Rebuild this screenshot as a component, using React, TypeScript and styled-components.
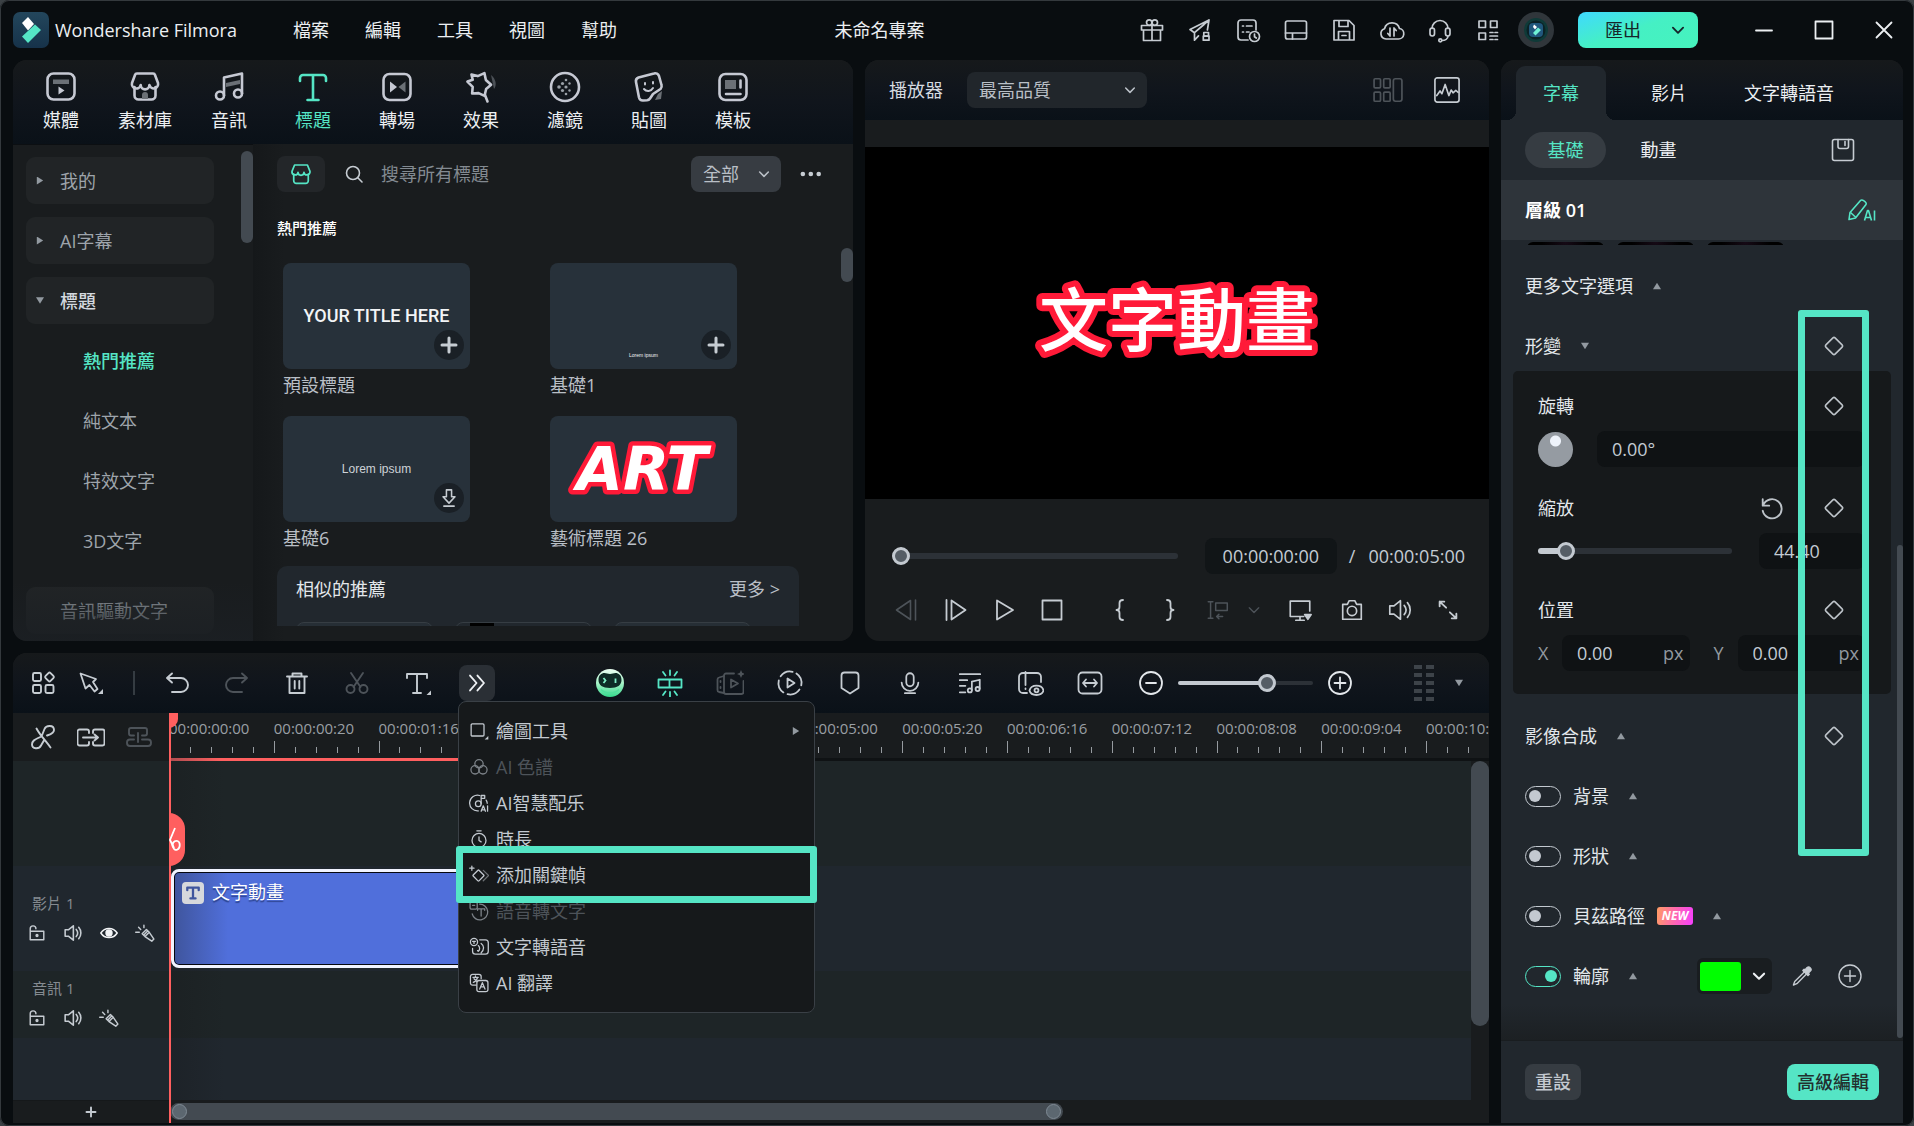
import React, { ReactNode } from "react";
import styled, { createGlobalStyle, css } from "styled-components";

const MINT = "#55e5c5";
const RED = "#ff5f5f";
const FONT = `"Open Sans", "Noto Sans CJK TC", sans-serif`;

const GlobalStyle = createGlobalStyle`
  *, *::before, *::after { box-sizing: border-box; }
  html, body, #root { height: 100%; }
  body { margin: 0; background: #3b4145; color: #d5dae0; font: 18px/24px ${FONT}; }
  button, input, select { font: inherit; color: inherit; margin: 0; padding: 0; border: 0; background: none; outline: none; }
  button { cursor: pointer; }
  h1, h2, p { margin: 0; font: inherit; }
`;

/* ---------- icons ---------- */

const Svg = styled.svg<{ $size: number; $weight: number }>`
  display: block;
  flex: none;
  width: ${(p) => p.$size}px;
  height: ${(p) => p.$size}px;
  fill: none;
  stroke: currentColor;
  stroke-width: ${(p) => p.$weight};
  stroke-linecap: round;
  stroke-linejoin: round;
`;

const glyphs: Record<string, ReactNode> = {
  gift: (<><path d="M3.5 9.5h21v4.5h-21zM5.5 14v10.5h17V14M14 9.5v15" /><circle cx="11.2" cy="6.6" r="2.7" /><circle cx="16.8" cy="6.6" r="2.7" /></>),
  send: (<><path d="M23 4L4 13.5l4.5 3.2L23 4l-1.6 10M8.500 16.700v7.500l4-4.300M8.500 16.700L18 8.500" /><rect x="17.800" y="16.500" width="4.700" height="3.700" /><rect x="17.300" y="20.200" width="5.700" height="4" /></>),
  history: (<><path d="M14 24H7a3 3 0 0 1-3-3V7a3 3 0 0 1 3-3h12a3 3 0 0 1 3 3v7" /><path d="M8.500 10h1M12.500 10H18M8.500 16h1M12.500 16H15" /><circle cx="20.500" cy="20.500" r="5" /><path d="M20.500 18v2.700l1.800 1.300" /></>),
  layout: (<><rect x="3.500" y="5" width="21" height="18" rx="2" /><path d="M3.500 17h21M10.500 17v6" /></>),
  save: (<><path d="M4 4.500h15l5 5V24H4zM9 4.500v6h9v-6M8.500 24v-8.500h11V24M12 19.500h4" /></>),
  cloud: (<><path d="M8 23a5.300 5.300 0 0 1-1.500-10.300 7.800 7.800 0 0 1 15-0.200A5.300 5.300 0 0 1 20.300 23z" /><path d="M12 12v8M12 20l-2.200-2.500M16 20v-8M16 12l2.200 2.500" /></>),
  headset: (<><path d="M6 12.500a8 8 0 0 1 16 0" /><rect x="4" y="12" width="4.500" height="8" rx="2.200" /><rect x="19.500" y="12" width="4.500" height="8" rx="2.200" /><path d="M22 20c0 3-3 4.500-6 4.500" /><circle cx="14.300" cy="24.300" r="1.500" /></>),
  qr: (<><rect x="5" y="5" width="6.500" height="6.500" /><rect x="16.500" y="5" width="6.500" height="6.500" /><rect x="5" y="17" width="6.500" height="6.500" /><path d="M16 16.500h3M21 16.500h2.500M16 20h7.500M16 23.500h3M21 23.500h2.500" /></>),
  minimize: <path d="M6 14.500h16" />,
  maximize: <rect x="5.500" y="5.500" width="17" height="17" />,
  close: <path d="M6.500 6.500l15 15M21.500 6.500l-15 15" />,
  chevron: <path d="M8.500 11.500L14 17l5.500-5.500" />,
  search: (<><circle cx="13" cy="13" r="6.500" /><path d="M17.800 17.800L22 22" /></>),
  store: (<><path d="M5.500 14v8a3 3 0 0 0 3 3h11a3 3 0 0 0 3-3v-8" /><path d="M6.500 3.500h15l3 7.500a3.400 3.400 0 0 1-7 1 3.500 3.500 0 0 1-7 0 3.400 3.400 0 0 1-7-1z" /></>),
  dots: (<g fill="currentColor" stroke="none"><circle cx="4.500" cy="14" r="2.700" /><circle cx="13.800" cy="14" r="2.700" /><circle cx="23" cy="14" r="2.700" /></g>),
  plus: <path d="M14 7v14M7 14h14" />,
  download: <path d="M11 4.500h6v8h4L14 20l-7-7.500h4zM8 23.500h12" />,
  compare: (<g><rect x="1" y="3.500" width="6" height="8.500" rx="1" /><rect x="10" y="3.500" width="6" height="8.500" rx="1" /><rect x="1" y="16" width="6" height="8.500" rx="1" /><rect x="10" y="16" width="6" height="8.500" rx="1" /><rect x="19" y="3.500" width="8" height="21" rx="2" /></g>),
  wave: (<><rect x="1" y="1" width="26" height="26" rx="2.500" /><path d="M3 20l3.500-5 2 3 3.500-10 4 12 2.500-6 2 3 3-2.500 2.500 2" /></>),
  prev: <path d="M18.500 4.500L4.500 14l14 9.500zM23.500 4v20" />,
  next: <path d="M9.500 4.500L23.500 14l-14 9.500zM4.500 4v20" />,
  play: <path d="M6 4.500L22 14 6 23.500z" />,
  stop: <rect x="4.500" y="4.500" width="19" height="19" />,
  braceL: <path d="M17 4c-3 0-3.500 1-3.500 3v4c0 2-1 3-3 3 2 0 3 1 3 3v4c0 2 .5 3 3.500 3" />,
  braceR: <path d="M11 4c3 0 3.500 1 3.500 3v4c0 2 1 3 3 3-2 0-3 1-3 3v4c0 2-.5 3-3.500 3" />,
  insert: (<><path d="M3.500 5h5M6 5v18M3.500 23h5" /><rect x="11.500" y="6.500" width="12.500" height="8" /><path d="M19 21h-6.500M15 18.500L12.500 21l2.500 2.500" /></>),
  monitor: (<><path d="M18 21H3.500V4.500h21V15M14 21v4M9.500 25h9" /><path d="M19 19h7l-3.500 5z" fill="currentColor" /></>),
  camera: (<><path d="M4 8h5l2-4h6l2 4h5v16H4z" /><circle cx="14" cy="15" r="5" /></>),
  speaker: (<><path d="M3 9.500h4.500L14.500 4v20l-7-5.500H3zM18.500 9c2.500 3 2.500 7 0 10M22 6c4 4.500 4 11.500 0 16" /></>),
  expand: (<><path d="M5 10V5h5M5 5l7 6.500M23 18v5h-5M23 23l-7-6.500" /></>),
  apps: (<><rect x="4" y="4" width="8" height="8" rx="1.500" /><rect x="4" y="16" width="8" height="8" rx="1.500" /><rect x="16.500" y="16" width="8" height="8" rx="1.500" /><rect x="17" y="4.500" width="7" height="7" rx="1.500" transform="rotate(45 20.500 8)" /></>),
  cursor: (<><path d="M3.500 4.500L19 10l-3 3 4.500 7-3 2.500L12.500 16l-4 3.500z" /><path d="M21 25h5v-5z" fill="currentColor" stroke="none" /></>),
  undo: <path d="M9 4.500L4 9l5 4.500M4 9h14a7 7 0 0 1 0 14H9" />,
  redo: <path d="M19 4.500L24 9l-5 4.500M24 9H10a7 7 0 0 0 0 14h9" />,
  trash: (<path d="M4 7.500h20M9.500 7.500v-3h9v3M6.500 7.500V24h15V7.500M11.700 12v7.500M16.300 12v7.500" />),
  cut: (<><path d="M8 4l9.500 14M20 4l-9.500 14" /><circle cx="7.500" cy="20" r="4" /><circle cx="20.500" cy="20" r="4" /></>),
  text: (<><path d="M4 9V5h20v4M14 5v19M10 24h8" /><path d="M23.500 26h5.500v-5.500z" fill="currentColor" stroke="none" /></>),
  serifT: <path d="M4 9V4.500h20V9M14 4.500v19M9.500 23.500h9" />,
  more: <path d="M6.500 6l7 8-7 8M14.500 6l7 8-7 8" />,
  autocut: (<><path d="M2.500 10.500h11v8h-11zM13.500 10.500h12v8h-12zM14 1.500v4.500M14 23v4.500M7 3l2.500 3.500M21 3l-2.500 3.500M7 26l2.500-3.500M21 26l-2.500-3.500" /></>),
  film: (<><path d="M18 4.500h-8a2 2 0 0 0-2 2V23a2 2 0 0 0 2 2h15.500a2 2 0 0 0 2-2V12" /><path d="M8 7L3 8.500a2 2 0 0 0-1.500 2V21a2 2 0 0 0 1.500 2l5 1M4.500 12v1M4.500 18v1" /><path d="M15 10.500v8l7-4z" /><path d="M25 1l1.200 2.800L29 5l-2.800 1.200L25 9l-1.200-2.800L21 5l2.800-1.200z" fill="currentColor" stroke="none" /></>),
  record: (<><circle cx="14" cy="14" r="11.500" strokeDasharray="13.500 4.560" transform="rotate(-56 14 14)" /><path d="M11.500 9.500v9l7-4.500z" /></>),
  marker: <path d="M5.500 6.500a3 3 0 0 1 3-3h11a3 3 0 0 1 3 3V19L14 24.500 5.500 19z" />,
  mic: (<><rect x="10" y="3.500" width="8" height="14" rx="4" /><path d="M5 13.500a9 9 0 0 0 18 0M8.500 25h11" /></>),
  music: (<><path d="M3 4.500h22M3 11h8M3 17h6M3 24h6" /><path d="M16 21.500v-9l8.500-2v9.500" /><circle cx="13.800" cy="22" r="2.200" /><circle cx="22.200" cy="20.500" r="2.200" /></>),
  preview: (<><path d="M11 24H7a4 4 0 0 1-4-4V8a4 4 0 0 1 4-4h14a4 4 0 0 1 4 4v5M9.500 3v13M9.500 19.500v.5" /><path d="M13.500 21.500c1.500-6.500 12.500-6.500 14 0-1.500 6-12.500 6-14 0z" /><circle cx="20.500" cy="21.300" r="2" /></>),
  fit: (<><rect x="2.500" y="3.500" width="23" height="21" rx="4" /><path d="M7 14h14M10 10.500L7 14l3 3.500M18 10.500l3 3.500-3 3.500" /></>),
  zoomOut: (<><circle cx="14" cy="14" r="11" /><path d="M9 14h10" /></>),
  zoomIn: (<><circle cx="14" cy="14" r="11" /><path d="M8.500 14h11M14 8.500v11" /></>),
  unlink: (<path d="M7.500 5.500c3 6 9 12 14 19M12.500 13.500L15.500 6c1.500-4 9.500-4.500 9.500 1 0 3.500-4 4.500-7 5.500M15.500 16.500l-3.500 6c-2 4-9 3.500-9-1 0-5 5-5.500 10-8.500" />),
  chain: (<><path d="M12 19v1.500a2 2 0 0 1-2 2H2.500a2 2 0 0 1-2-2v-12a2 2 0 0 1 2-2H10a2 2 0 0 1 2 2V10M16 10V8.500a2 2 0 0 1 2-2h7.500a2 2 0 0 1 2 2v12a2 2 0 0 1-2 2H18a2 2 0 0 1-2-2V19M6 14.500h15M17.500 11.500l3.500 3-3.500 3" /></>),
  magnet: (<path d="M9 12.500H6a2 2 0 0 1-2-2V7a2 2 0 0 1 2-2h14a2 2 0 0 1 2 2v3.500a2 2 0 0 1-2 2h-3M9 16.500H5a3 3 0 0 0-3 3V20a3 3 0 0 0 3 3h18a3 3 0 0 0 3-3v-.5a3 3 0 0 0-3-3h-6M13 10v9" />),
  lock: (<><path d="M4.500 11.500h19v12h-19zM4.500 11.500V8a4 4 0 0 1 8 0" /><circle cx="14" cy="17.500" r="1.300" fill="currentColor" /></>),
  eye: (<><path d="M2.500 14C8 5.500 20 5.500 25.500 14 20 22.500 8 22.500 2.500 14z" /><circle cx="14" cy="14" r="4.200" fill="currentColor" /></>),
  wand: (<><path d="M10 15l6-6 4 4-6 6zM14 19c1-1 4-5 6-6l6.500 9.500-3 3zM12.500 3v3.500M5 6l3 3M1 13h5M13 16l4-4" /></>),
  diamond: <rect x="7.500" y="7.500" width="13" height="13" rx="1.500" transform="rotate(45 14 14)" />,
  reset: <path d="M4 4.500v7h7M4.500 11A10.300 10.300 0 1 1 4 17" />,
  preset: (<><rect x="3.500" y="3.500" width="21" height="21" rx="2" /><path d="M9 3.500v7a2 2 0 0 0 2 2h6.500a2 2 0 0 0 2-2v-7M16 5.500v4" /></>),
  dropper: (<><path d="M17 9L5.500 20.500 4 24.500l4-1.500L19.500 11.500" /><path d="M15 7.500l6 6 1.500-1.500-1-1.500 2.500-2.500c2-2-1.500-6-4-4L17.500 7l-1-1z" fill="currentColor" /></>),
  square: (<><rect x="3" y="4" width="18" height="17" rx="1.500" /><path d="M22 26h5v-5z" fill="currentColor" stroke="none" /></>),
  palette: (<><circle cx="14" cy="9.500" r="5.800" /><circle cx="8.500" cy="18" r="5.800" /><circle cx="19.500" cy="18" r="5.800" /></>),
  aiMusic: (<><path d="M13 25A11 11 0 1 1 15 3.500" /><circle cx="13" cy="15" r="4" /><path d="M17 15V3.500h5v4h-5M24 10c1 1.500 1.500 3 1.500 4.500M17 25.500l3-7.500 3 7.500M18 23.500h4M26 18v7.500" /></>),
  timer: (<><circle cx="14" cy="16" r="9.800" /><path d="M14 11v5l3 2M11 2.500h6" /></>),
  keyframe: (<><rect x="7.500" y="9" width="11.500" height="11.500" rx="1" transform="rotate(45 13.250 14.750)" /><path d="M20 7.500l7.500 7.200-7.500 7.300" opacity=".5" /><path d="M4 1.500v6M1 4.500h6" /></>),
  speechText: (<><rect x="1.500" y="1.500" width="10" height="10" rx="2" /><path d="M5 6h3M15 4.500A11 11 0 1 1 4.500 18M12 13v-2h10v2M17 11v10" /></>),
  textSpeech: (<><circle cx="7" cy="7" r="5" /><path d="M5 6h4M7 6v3M15 4h8a4 4 0 0 1 4 4v12a4 4 0 0 1-4 4H9a4 4 0 0 1-4-4v-4M12 19l.5.500M13 12c2.500 2 2.500 6 0 8M17 9c4.500 3 4.500 9 0 13" /></>),
  translate: (<><path d="M10 17H5a3 3 0 0 1-3-3V5a3 3 0 0 1 3-3h9a3 3 0 0 1 3 3v3M5.500 6H13M9 4v2M12 6c-1 4-3 6-6 7M7 8l4 4" /><rect x="11" y="10.500" width="15.500" height="15.500" rx="3" /><path d="M15 22.500l3.700-9 3.700 9M16.500 19.500h4.500" /></>),
};

const Icon = ({ name, size = 28, weight = 1.6 }: { name: string; size?: number; weight?: number }) => (
  <Svg viewBox="0 0 28 28" $size={size} $weight={weight} aria-hidden="true">{glyphs[name]}</Svg>
);

const tabGlyphs: Record<string, ReactNode> = {
  media: (<><rect x="4.500" y="4.500" width="27" height="26" rx="6" /><path d="M10 10.500h16v4.500H10z" fill="#6b7076" stroke="none" /><path d="M15.500 17.500v8l6-4z" fill="currentColor" stroke="none" /></>),
  stock: (<><path d="M7.500 18v8.500a4 4 0 0 0 4 4h13a4 4 0 0 0 4-4V18" /><path d="M10 4.500h16a2 2 0 0 1 2 1.500l3 8a4.300 4.300 0 0 1-8.600 2 4.300 4.300 0 0 1-8.700 0A4.300 4.300 0 0 1 5 14l3-8a2 2 0 0 1 2-1.500z" /><path d="M15 30v-4a3 3 0 0 1 6 0v4z" fill="#6b7076" stroke="none" /></>),
  audio: (<><circle cx="9" cy="26.500" r="4" /><circle cx="27" cy="24.500" r="4" /><path d="M13 26.500V8.500l18-4v20" /><path d="M15 14l14-3v4l-14 3z" fill="#6b7076" stroke="none" /></>),
  title: <path d="M5 12V9a3 3 0 0 1 3-3h20a3 3 0 0 1 3 3v3M18 6v25M12.500 31h11" />,
  transition: (<><rect x="4.500" y="5" width="27" height="26" rx="6" /><path d="M11 12.500l7 5.500-7 5.500z" fill="currentColor" stroke="none" /><path d="M26.500 12.500l-7 5.500 7 5.500z" fill="#6b7076" stroke="none" /></>),
  effect: (<><path d="M10 4.500l6 2.500 7-2 .5 7 4.500 5.500-5.500 3.500-2.500 6.500-5.500-3.500-6.500-.5 1.500-6.500L5 11l5.500-1z" transform="rotate(-8 16 16)" /><path d="M22 26l2.500 6.500" /><path d="M28 6c5 4 6 10 3 14z" fill="#4b5056" stroke="none" /></>),
  filter: (<><circle cx="18" cy="18" r="14" /><g fill="#9aa0a7" stroke="none"><circle cx="12" cy="18" r="1.800" /><circle cx="15.500" cy="14.500" r="1.600" /><circle cx="15.500" cy="21.500" r="1.600" /><circle cx="19" cy="18" r="1.600" /><circle cx="19" cy="11" r="1.300" /><circle cx="19" cy="25" r="1.300" /><circle cx="22.500" cy="14.500" r="1.200" /><circle cx="22.500" cy="21.500" r="1.200" /></g></>),
  sticker: (<><path d="M22 25l-3 4.500a4 4 0 0 1-3 1.800l-4 .2a4 4 0 0 1-4-3L5 13a4 4 0 0 1 2.500-4.500L23 4.500a4 4 0 0 1 5 2.500l2.500 9a4 4 0 0 1-1 4z" /><path d="M14 14v1.500M22 13v1.500M13 20c2.500 3 7 2.500 9-1" strokeWidth="2" /><path d="M31 22l-1 8-6 1 3-6z" fill="#6b7076" stroke="none" /></>),
  template: (<><rect x="4.500" y="5" width="27" height="26" rx="6" /><path d="M10 11h11v9H10z" fill="#6b7076" stroke="none" /><path d="M25.500 11.500v7M11 25h14.500" /></>),
};

const Triangle = styled.span<{ $dir: "up" | "down" | "right" }>`
  flex: none;
  width: 8px;
  height: 8px;
  background: #9299a0;
  clip-path: ${(p) =>
    p.$dir === "up" ? "polygon(50% 10%, 100% 90%, 0 90%)"
    : p.$dir === "down" ? "polygon(0 10%, 100% 10%, 50% 90%)"
    : "polygon(10% 0, 90% 50%, 10% 100%)"};
`;

/* ---------- window ---------- */

const Window = styled.div`
  height: 100vh;
  min-height: 900px;
  display: flex;
  flex-direction: column;
  background: #090d10;
  border-radius: 9px;
  box-shadow: inset 0 0 0 1px #34393d;
  overflow: hidden;
`;

const TitleBar = styled.header`
  flex: 0 0 60px;
  display: grid;
  grid-template-columns: 1fr auto 1fr;
  align-items: center;
  padding-left: 13px;
`;

const BarSide = styled.div<{ $end?: boolean }>`
  display: flex;
  align-items: center;
  justify-content: ${(p) => (p.$end ? "flex-end" : "flex-start")};
  min-width: 0;
`;

const AppName = styled.h1`
  margin-left: 6px;
  color: #eceff2;
  font-size: 18px;
  white-space: nowrap;
  width: 202px;
`;

const Menus = styled.nav`
  display: flex;
  margin-left: 18px;
`;

const MenuButton = styled.button`
  width: 72px;
  height: 36px;
  color: #eceff2;
`;

const ProjectName = styled.p`
  color: #eceff2;
  padding-right: 168px;
`;

const IconButton = styled.button<{ $w?: number; $dim?: boolean; $color?: string }>`
  flex: none;
  width: ${(p) => p.$w ?? 48}px;
  height: 36px;
  display: flex;
  align-items: center;
  justify-content: center;
  color: ${(p) => (p.$dim ? "#4d5359" : p.$color ?? "#c6ccd2")};
`;

const Avatar = styled.button`
  width: 36px;
  height: 36px;
  margin: 0 24px 0 6px;
  border-radius: 50%;
  background: #30363b;
  display: grid;
  place-items: center;
`;

const ExportButton = styled.button`
  flex: none;
  width: 120px;
  height: 36px;
  margin-right: 36px;
  padding: 0 7px 0 27px;
  display: flex;
  align-items: center;
  justify-content: space-between;
  border-radius: 8px;
  background: linear-gradient(160deg, #3fd9ff 0%, #45f0c4 48%, #46f3bd 100%);
  color: #16252a;
`;

const Workspace = styled.main`
  flex: 1;
  min-height: 0;
  display: grid;
  grid-template-columns: minmax(0, 840fr) minmax(0, 624fr) minmax(0, 402fr);
  grid-template-rows: minmax(0, 581fr) minmax(0, 470fr);
  gap: 12px;
  padding: 0 11px 3px 13px;
`;

const Panel = styled.section`
  position: relative;
  display: flex;
  flex-direction: column;
  min-width: 0;
  min-height: 0;
  overflow: hidden;
  border-radius: 14px;
  background: #191c1e;
`;

const headerShade = css`
  background: linear-gradient(#16191b, #10151c 50%, #0a1118);
`;

/* ---------- media library ---------- */

const LibraryTabs = styled.nav`
  ${headerShade}
  flex: 0 0 84px;
  display: flex;
  padding-left: 6px;
`;

const LibraryTab = styled.button<{ $active?: boolean }>`
  width: 84px;
  display: flex;
  flex-direction: column;
  align-items: center;
  padding-top: 9px;
  gap: 3px;
  white-space: nowrap;
  color: ${(p) => (p.$active ? MINT : "#eceff2")};
  svg { color: ${(p) => (p.$active ? MINT : "#c6c9d3")}; }
`;

const LibraryBody = styled.div`
  flex: 1;
  min-height: 0;
  display: grid;
  grid-template-columns: 240px minmax(0, 1fr);
  grid-template-rows: minmax(0, 1fr);
`;

const Sidebar = styled.aside`
  position: relative;
  display: flex;
  flex-direction: column;
  gap: 13px;
  padding: 12px 39px 0 13px;
  border-top: 1px solid #0c0f12;
  overflow: hidden;
  &::after {
    content: "";
    position: absolute;
    inset: auto 0 0;
    height: 60px;
    background: linear-gradient(rgba(27, 31, 35, 0), rgba(27, 31, 35, 0.9));
    pointer-events: none;
  }
`;

const Folder = styled.button<{ $open?: boolean; $last?: boolean }>`
  flex: none;
  height: 47px;
  margin-top: ${(p) => (p.$last ? 10 : 0)}px;
  display: flex;
  align-items: center;
  gap: 16px;
  padding-left: 10px;
  border-radius: 9px;
  background: #212426;
  color: ${(p) => (p.$open ? "#d3d8de" : "#9ea4ab")};
  font-weight: ${(p) => (p.$open ? 500 : 400)};
`;

const Blank = styled.span`
  width: 8px;
`;

const SubFolder = styled(Folder)<{ $active?: boolean }>`
  padding-left: 57px;
  background: none;
  color: ${(p) => (p.$active ? MINT : "#9ea4ab")};
  font-weight: ${(p) => (p.$active ? 500 : 400)};
`;

const Thumb = styled.span<{ $top: number; $height: number; $width?: number }>`
  position: absolute;
  right: 0;
  top: ${(p) => p.$top}px;
  width: ${(p) => p.$width ?? 12}px;
  height: ${(p) => p.$height}px;
  border-radius: 9px;
  background: #434a51;
`;

const Library = styled.div`
  position: relative;
  display: flex;
  flex-direction: column;
  min-width: 0;
  padding: 12px 0 15px 24px;
  background: linear-gradient(90deg, #15181a, #191c1e 32px);
`;

const SearchRow = styled.div`
  flex: none;
  display: flex;
  align-items: center;
  padding-right: 12px;
`;

const StoreButton = styled.button`
  width: 48px;
  height: 36px;
  display: grid;
  place-items: center;
  border-radius: 8px;
  background: #232629;
  color: ${MINT};
`;

const SearchBox = styled.label`
  flex: 1;
  min-width: 0;
  display: flex;
  align-items: center;
  gap: 13px;
  margin-left: 15px;
  color: #c6ccd2;
  input { flex: 1; min-width: 0; }
  input::placeholder { color: #838a91; opacity: 1; }
`;

const SelectBox = styled.span<{ $w: number; $bg: string }>`
  position: relative;
  flex: none;
  width: ${(p) => p.$w}px;
  height: 36px;
  color: #b9bfc6;
  select {
    width: 100%;
    height: 100%;
    padding-left: 12px;
    appearance: none;
    border-radius: 8px;
    background: ${(p) => p.$bg};
  }
  svg { position: absolute; right: 6px; top: 7px; pointer-events: none; }
`;

const SectionTitle = styled.h2`
  flex: none;
  margin-top: 26px;
  font-size: 15px;
  line-height: 20px;
  font-weight: 500;
  color: #fff;
`;

const TitleGrid = styled.div`
  flex: none;
  display: grid;
  grid-template-columns: repeat(2, 187px);
  column-gap: 80px;
  row-gap: 15px;
  margin: 25px 0 0 6px;
`;

const Card = styled.figure`
  margin: 0;
  figcaption { height: 32px; line-height: 32px; color: #b9bfc6; white-space: nowrap; }
`;

const Preview = styled.div<{ $kind: string }>`
  position: relative;
  height: 106px;
  display: grid;
  place-items: center;
  border-radius: 8px;
  background: #27313a;
  color: #f2f4f6;
  ${(p) => p.$kind === "title" && css`font: 500 18px/24px Roboto, sans-serif;`}
  ${(p) => p.$kind === "small" && css`
    font: 5px/8px "Liberation Sans", sans-serif;
    place-items: end center;
    padding-bottom: 10px;
  `}
  ${(p) => p.$kind === "lorem" && css`font: 12px/16px "Liberation Sans", sans-serif; color: #cdd2d7;`}
`;

/* Lettering with a round-cornered outline behind the fill */
const OutlinedText = styled.text<{ $stroke: number }>`
  fill: #fff;
  stroke: #ff1a38;
  stroke-width: ${(p) => p.$stroke}px;
  stroke-linejoin: round;
  paint-order: stroke fill;
  text-anchor: middle;
`;

const ArtText = styled(OutlinedText)`
  font: italic 700 60px "DejaVu Sans", sans-serif;
`;

const VideoText = styled(OutlinedText)`
  font: 500 69px "Noto Sans CJK TC", sans-serif;
`;

const CornerButton = styled.button`
  position: absolute;
  right: 6px;
  bottom: 9px;
  width: 30px;
  height: 30px;
  display: grid;
  place-items: center;
  border-radius: 50%;
  background: #1a2026;
  color: #c6ccd2;
`;

const Similar = styled.div`
  flex: 1;
  min-height: 0;
  overflow: hidden;
  margin: 12px 54px 0 0;
  padding: 11px 19px 0;
  border-radius: 10px 10px 0 0;
  background: #21272d;
`;

const SimilarHead = styled.div`
  display: flex;
  justify-content: space-between;
  color: #e3e7eb;
  button { color: #b9bfc6; }
`;

const SimilarRow = styled.div`
  display: flex;
  gap: 22px;
  margin-top: 21px;
`;

const SimilarItem = styled.div<{ $dark?: boolean }>`
  flex: none;
  width: 137px;
  height: 77px;
  border: 1px solid #363d43;
  border-radius: 8px;
  background: ${(p) => (p.$dark ? "linear-gradient(90deg, transparent 14px, #000 14px, #000 38px, transparent 38px)" : "#262e35")};
`;

/* ---------- player ---------- */

const PlayerHead = styled.header`
  ${headerShade}
  flex: 0 0 60px;
  display: flex;
  align-items: center;
  gap: 24px;
  padding: 0 28px 0 24px;
  color: #d5dae0;
`;

const Spacer = styled.span`
  flex: 1;
`;

const Screen = styled.div`
  flex: 1;
  min-height: 0;
  margin-top: 27px;
  display: grid;
  place-items: center;
  background: #000;
`;

const SeekRow = styled.div`
  flex: none;
  display: flex;
  align-items: center;
  margin-top: 39px;
  padding: 0 24px 0 27px;
  color: #c3cbd3;
`;

const Range = styled.input<{ $fill: number; $bar?: number }>`
  flex: 1;
  min-width: 0;
  height: 18px;
  appearance: none;
  &::-webkit-slider-runnable-track {
    height: ${(p) => p.$bar ?? 6}px;
    border-radius: 3px;
    background: linear-gradient(90deg, #c3c9d0 ${(p) => p.$fill}%, #2c3137 ${(p) => p.$fill}%);
  }
  &::-webkit-slider-thumb {
    appearance: none;
    width: 18px;
    height: 18px;
    margin-top: ${(p) => Math.round(((p.$bar ?? 6) - 18) / 2)}px;
    border: 3px solid #c3c9d0;
    border-radius: 50%;
    background: #555d65;
  }
`;

const TimeInput = styled.input`
  flex: none;
  width: 132px;
  height: 36px;
  margin: 0 12px 0 27px;
  text-align: center;
  border-radius: 8px;
  background: #111517;
`;

const Slash = styled.span`
  margin-right: 13px;
`;

const Transport = styled.div`
  flex: none;
  display: flex;
  align-items: center;
  justify-content: space-between;
  padding: 18px 17px 13px;
`;

const Group = styled.div`
  display: flex;
  align-items: center;
`;

/* ---------- properties ---------- */

const PropTabs = styled.nav`
  ${headerShade}
  flex: 0 0 60px;
  display: flex;
  align-items: flex-end;
  padding-left: 15px;
`;

const PropTab = styled.button<{ $w: number; $active?: boolean }>`
  position: relative;
  width: ${(p) => p.$w}px;
  height: 54px;
  white-space: nowrap;
  color: ${(p) => (p.$active ? MINT : "#eceff2")};
  ${(p) => p.$active && css`
    background: #21272d;
    border-radius: 9px 9px 0 0;
    &::before, &::after {
      content: "";
      position: absolute;
      bottom: 0;
      width: 9px;
      height: 9px;
    }
    &::before { right: 100%; background: radial-gradient(circle at 0 0, transparent 9px, #21272d 9px); }
    &::after { left: 100%; background: radial-gradient(circle at 100% 0, transparent 9px, #21272d 9px); }
  `}
`;

const SubTabs = styled.div`
  flex: 0 0 60px;
  display: flex;
  align-items: center;
  padding: 0 42px 0 24px;
  background: #21272d;
`;

const Pill = styled.button<{ $active?: boolean }>`
  width: ${(p) => (p.$active ? 81 : 105)}px;
  height: 36px;
  border-radius: 18px;
  background: ${(p) => (p.$active ? "#363c42" : "none")};
  color: ${(p) => (p.$active ? MINT : "#eceff2")};
`;

const LayerRow = styled.div`
  flex: 0 0 60px;
  display: flex;
  align-items: center;
  justify-content: space-between;
  padding: 0 27px 0 24px;
  background: #2e343a;
  color: #fff;
  font-weight: 600;
`;

const PropScroll = styled.div`
  position: relative;
  flex: 1;
  min-height: 0;
  overflow: hidden;
  padding-top: 2px;
  background: linear-gradient(#21272d calc(100% - 36px), #1c2023);
`;

const ChipStrip = styled.div`
  display: flex;
  gap: 13px;
  height: 3px;
  margin: 0 0 16px 26px;
  overflow: hidden;
`;

const Chip = styled.span`
  width: 77px;
  height: 40px;
  border-radius: 6px;
  background: radial-gradient(circle at 50% 0, #160a16, #000 24px);
`;

const PropRow = styled.div`
  height: 50px;
  margin-top: 10px;
  padding: 0 51px 0 24px;
  display: flex;
  align-items: center;
  color: #e3e7eb;
`;

const Fold = styled.button`
  display: flex;
  align-items: center;
  gap: 20px;
`;

const KeyButton = styled.button`
  width: 36px;
  height: 36px;
  display: grid;
  place-items: center;
  color: #bdc3c9;
`;

const TransformCard = styled.div`
  margin: 0 12px 17px;
  padding: 17px 26px 23px 25px;
  display: flex;
  flex-direction: column;
  gap: 23px;
  border-radius: 5px;
  background: #16191b;
`;

const Field = styled.div`
  display: grid;
  grid-template-columns: minmax(0, 1fr);
  row-gap: 7px;
`;

const FieldHead = styled.div`
  height: 36px;
  display: flex;
  align-items: center;
  gap: 26px;
  padding-right: 13px;
  color: #e3e7eb;
`;

const FieldBody = styled.div<{ $gap: number }>`
  height: 36px;
  display: flex;
  align-items: center;
  gap: ${(p) => p.$gap}px;
  color: #9299a0;
`;

const NumberBox = styled.span<{ $w?: number }>`
  flex: ${(p) => (p.$w ? `0 0 ${p.$w}px` : "1")};
  min-width: 0;
  height: 36px;
  display: flex;
  align-items: center;
  padding: 0 6px 0 15px;
  border-radius: 8px;
  background: #0f1214;
  input { flex: 1; width: 0; min-width: 0; color: #c3cbd3; }
`;

const AxisLabel = styled.label`
  flex: none;
  width: 12px;
`;

const Pair = styled.span`
  flex: 1;
  min-width: 0;
  display: flex;
  align-items: center;
  gap: 12px;
`;

const Dial = styled.button`
  flex: none;
  width: 35px;
  height: 35px;
  border-radius: 50%;
  background: radial-gradient(circle at 50% 9px, #eef3fb 5px, #959ba2 6px);
`;

const Toggle = styled.input`
  appearance: none;
  flex: none;
  width: 36px;
  height: 21px;
  margin-right: 12px;
  display: flex;
  align-items: center;
  padding: 0 3px;
  border: 1px solid #c3c9d0;
  border-radius: 11px;
  &::before {
    content: "";
    width: 12px;
    height: 12px;
    border-radius: 50%;
    background: #c3c9d0;
  }
  &:checked { border-color: ${MINT}; justify-content: flex-end; }
  &:checked::before { background: ${MINT}; }
`;

const ToggleLabel = styled.label`
  margin-right: 20px;
`;

const NewBadge = styled.span`
  margin: 0 20px 0 -8px;
  width: 36px;
  height: 18px;
  border-radius: 3px;
  background: linear-gradient(100deg, #ff9d63, #ff66b0 50%, #f53fff);
  font: italic 700 12px/18px "Open Sans", sans-serif;
  text-align: center;
  color: #fff;
`;

const ColorBox = styled.span`
  width: 75px;
  height: 36px;
  display: flex;
  align-items: center;
  gap: 5px;
  padding-left: 3px;
  border-radius: 6px;
  background: #191d20;
  input { width: 41px; height: 29px; }
  input::-webkit-color-swatch-wrapper { padding: 0; }
  input::-webkit-color-swatch { border: 0; border-radius: 3px; }
`;

const OutlineTools = styled.div`
  flex: 1;
  display: flex;
  align-items: center;
  justify-content: flex-end;
  gap: 12px;
  margin-right: -16px;
`;

const Foot = styled.footer`
  flex: 0 0 83px;
  display: flex;
  justify-content: space-between;
  align-items: center;
  padding: 0 24px;
  border-top: 1px solid #191d20;
  background: #21272d;
`;

const FootButton = styled.button<{ $primary?: boolean }>`
  height: 36px;
  padding: 0 10px;
  border-radius: 8px;
  font-weight: 500;
  background: ${(p) => (p.$primary ? MINT : "#363c42")};
  color: ${(p) => (p.$primary ? "#22302f" : "#c3c9d0")};
`;

const KeyframeMark = styled.span`
  position: absolute;
  top: 250px;
  right: 34px;
  width: 71px;
  height: 546px;
  border: 7px solid ${MINT};
  border-radius: 3px;
  pointer-events: none;
`;

/* ---------- timeline ---------- */

const TimelinePanel = styled(Panel)`
  grid-column: 1 / 3;
  border-radius: 14px 14px 0 0;
`;

const Tools = styled.div`
  ${headerShade}
  position: relative;
  z-index: 4;
  flex: 0 0 60px;
  display: flex;
  align-items: center;
  padding: 0 26px 0 6px;
`;

const Divider = styled.span`
  width: 2px;
  height: 24px;
  margin: 0 12px 0 18px;
  background: #353c42;
`;

const MoreAnchor = styled.div`
  position: relative;
  margin: 0 85px 0 12px;
`;

const MoreButton = styled.button`
  width: 36px;
  height: 36px;
  display: grid;
  place-items: center;
  border-radius: 8px;
  background: #2a2f35;
  color: #eef1f4;
`;

const Dropdown = styled.div`
  position: absolute;
  left: -1px;
  top: 36px;
  width: 357px;
  padding: 11px 0;
  border: 1px solid #3a4046;
  border-radius: 8px;
  background: #16191b;
`;

const DropItem = styled.button<{ $dim?: boolean; $marked?: boolean }>`
  position: relative;
  z-index: ${(p) => (p.$marked ? 1 : 0)};
  width: 100%;
  height: 36px;
  display: flex;
  align-items: center;
  gap: 7px;
  padding: 0 14px 0 10px;
  color: ${(p) => (p.$dim ? "#4d5359" : "#c3c9d0")};
  svg { color: ${(p) => (p.$dim ? "#7d8389" : "#c3c9d0")}; }
  ${(p) => p.$marked && css`
    &::after {
      content: "";
      position: absolute;
      inset: -11px -3px -10px;
      border: 7px solid ${MINT};
      border-radius: 3px;
    }
  `}
`;

const ZoomGroup = styled.div`
  display: flex;
  align-items: center;
  gap: 12px;
  width: 219px;
  margin: 0 auto 0 16px;
`;

const Meter = styled.div`
  display: grid;
  grid-template-columns: 8px 8px;
  gap: 4px;
  margin-right: 21px;
  span { height: 4px; background: #3d4349; }
`;

const Board = styled.div`
  position: relative;
  flex: 1;
  min-height: 0;
  display: grid;
  grid-template-columns: 156px minmax(0, 1fr) 18px;
  grid-template-rows: 48px 105px 105px 67px minmax(0, 1fr) 23px;
`;

const TrackTools = styled.div`
  display: flex;
  align-items: center;
  padding-left: 6px;
`;

const Ruler = styled.div`
  grid-column: 2 / 4;
  display: flex;
  overflow: hidden;
  border-bottom: 3px solid #0f1214;
`;

const RulerCell = styled.div`
  flex: 0 0 calc(100% / 12.6);
  display: flex;
  flex-direction: column;
  justify-content: flex-end;
  padding-bottom: 5px;
  font-size: 15px;
  line-height: 20px;
  color: #9a9fa4;
  white-space: nowrap;
`;

const Ticks = styled.div`
  height: 13px;
  display: grid;
  grid-template-columns: repeat(5, 1fr);
  align-items: end;
  margin-top: 2px;
`;

const Tick = styled.span<{ $major?: boolean }>`
  height: ${(p) => (p.$major ? 12 : 6)}px;
  border-left: 1px solid #969ba0;
`;

const Lane = styled.div<{ $alt?: boolean }>`
  position: relative;
  background: linear-gradient(90deg, rgba(24, 26, 28, 0.35), rgba(24, 26, 28, 0) 56px), ${(p) => (p.$alt ? "#20272e" : "#1e2527")};
`;

const TrackHead = styled.div<{ $alt?: boolean; $top?: number }>`
  display: flex;
  flex-direction: column;
  gap: 2px;
  padding: ${(p) => p.$top ?? 0}px 0 0 6px;
  background: ${(p) => (p.$alt ? "#20272e" : "#1e2527")};
  font-size: 15px;
  line-height: 20px;
  color: #858b91;
  p { padding-left: 13px; }
`;

const Clip = styled.div`
  width: calc(100% / 2.07);
  height: 99px;
  margin: 3px 0 0 2px;
  padding: 8px 8px;
  display: flex;
  align-items: flex-start;
  gap: 8px;
  border: 3px solid #f1f4ff;
  border-radius: 8px;
  background: linear-gradient(90deg, #3f559d, #506fdb 54px);
  box-shadow: inset 0 0 0 1px #05070f;
  color: #fff;
  text-shadow: 0 2px 1px #2d448f;
`;

const ClipBadge = styled.span`
  width: 22px;
  height: 22px;
  margin-top: 2px;
  display: grid;
  place-items: center;
  border-radius: 4px;
  background: #d6d8dc;
  color: #3f559d;
`;

const VScroll = styled.div`
  position: relative;
  grid-column: 3;
  grid-row: 2 / 6;
`;

const AddTrack = styled.button`
  display: grid;
  place-items: center;
  border-top: 1px solid #15181a;
  color: #c3c9d0;
`;

const HScroll = styled.div`
  grid-column: 2 / 4;
  padding: 3px 426px 3px 1px;
`;

const HBar = styled.div`
  height: 17px;
  display: flex;
  align-items: center;
  justify-content: space-between;
  padding: 0 2px;
  border-radius: 9px;
  background: #434a51;
  span { width: 15px; height: 15px; border: 1px solid #7f8a94; border-radius: 50%; background: #5c6770; }
`;

const Playhead = styled.div`
  position: absolute;
  top: 0;
  bottom: 0;
  left: 156px;
  width: 2px;
  background: ${RED};
`;

const PlayheadCap = styled.span`
  position: absolute;
  top: 0;
  left: 0;
  width: 9px;
  height: 15px;
  border-radius: 0 0 9px 0;
  background: ${RED};
`;

const SplitHandle = styled.button`
  position: absolute;
  top: 100px;
  left: 0;
  width: 16px;
  height: 53px;
  overflow: hidden;
  border-radius: 0 16px 16px 0;
  background: ${RED};
  color: #fff;
`;

const RenderBar = styled.span`
  position: absolute;
  top: 45px;
  left: 158px;
  width: calc((100% - 156px) / 2.1);
  height: 3px;
  background: linear-gradient(90deg, #b04d50, ${RED} 50px);
`;

/* ---------- data ---------- */

const menus = ["檔案", "編輯", "工具", "視圖", "幫助"];
const barIcons = ["gift", "send", "history", "layout", "save", "cloud", "headset", "qr"];
const tabs = [
  ["media", "媒體"], ["stock", "素材庫"], ["audio", "音訊"], ["title", "標題"], ["transition", "轉場"],
  ["effect", "效果"], ["filter", "濾鏡"], ["sticker", "貼圖"], ["template", "模板"],
];
const subFolders = ["熱門推薦", "純文本", "特效文字", "3D文字"];
const cards = [
  { kind: "title", text: "YOUR TITLE HERE", label: "預設標題", icon: "plus" },
  { kind: "small", text: "Lorem ipsum", label: "基礎1", icon: "plus" },
  { kind: "lorem", text: "Lorem ipsum", label: "基礎6", icon: "download" },
  { kind: "art", text: "ART", label: "藝術標題 26", icon: "" },
];
const dropItems = [
  { icon: "square", text: "繪圖工具", arrow: true },
  { icon: "palette", text: "AI 色譜", dim: true },
  { icon: "aiMusic", text: "AI智慧配乐" },
  { icon: "timer", text: "時長" },
  { icon: "keyframe", text: "添加關鍵幀", marked: true },
  { icon: "speechText", text: "語音轉文字", dim: true },
  { icon: "textSpeech", text: "文字轉語音" },
  { icon: "translate", text: "AI 翻譯" },
];
const FRAME_RATE = 24;
const pad = (n: number) => String(n).padStart(2, "0");
const rulerLabels = Array.from({ length: 13 }, (_, i) => {
  const frame = i * 20;
  return `00:00:${pad(Math.floor(frame / FRAME_RATE))}:${pad(frame % FRAME_RATE)}`;
});

/* ---------- parts ---------- */

const Logo = () => (
  <svg width="36" height="36" viewBox="0 0 36 36" aria-hidden="true">
    <defs><linearGradient id="lg" x1="0" y1="0" x2="0" y2="1"><stop offset="0" stopColor="#23465c" /><stop offset="1" stopColor="#16324a" /></linearGradient></defs>
    <rect width="36" height="36" rx="7" fill="url(#lg)" />
    <path d="M15 5l6 7-6 6.500L9 11z" fill="#fff" />
    <path d="M22 12.500l6 5.500-13 13-6-6.500z" fill={MINT} />
  </svg>
);

const AvatarArt = () => (
  <svg width="26" height="26" viewBox="0 0 26 26" aria-hidden="true">
    <circle cx="13" cy="13" r="12" fill="#0f3a38" />
    <circle cx="13" cy="13" r="9.500" fill="#0b2226" />
    <rect x="6" y="6" width="14" height="14" rx="4" fill="#20577c" />
    <path d="M11 7.500l3 2.500-2 2.500L10 10z" fill="#fff" />
    <path d="M15 10.500l3 2.500-5.500 5.500-2.500-2.500z" fill="#6ff0d4" />
  </svg>
);

const Robot = () => (
  <svg width="32" height="32" viewBox="0 0 32 32" aria-hidden="true">
    <defs><linearGradient id="rb" x1="0" y1="0" x2="0" y2="1"><stop offset="0" stopColor="#e9fff2" /><stop offset=".5" stopColor="#a8f3c8" /><stop offset="1" stopColor="#35d98c" /></linearGradient></defs>
    <circle cx="16" cy="16" r="14" fill="url(#rb)" />
    <path d="M4.500 13c0-5 3-7 6-7 2 0 3 1 5.500 1s3.500-1 5.500-1c3 0 6 2 6 7s-4 8-11.500 8S4.500 18 4.500 13z" fill="#0d2c26" />
    <path d="M9.500 11l2 2.500-2 2.500M21.500 11.500v4.500" stroke="#7ff0c8" strokeWidth="1.800" fill="none" />
    <path d="M7 22.500c4 4.500 14 4.500 18 0" stroke="#4fe09c" strokeWidth="1.500" fill="none" />
  </svg>
);

const AiPen = () => (
  <svg width="28" height="28" viewBox="0 0 28 28" fill="none" stroke={MINT} strokeWidth="1.600" strokeLinejoin="round" aria-hidden="true">
    <path d="M1 23.500l1-7L12.500 4.500c1.500-1.500 7 2 5.500 4L7.500 22z" />
    <path d="M2.500 16.500l5.500 5" />
    <path d="M16.500 24.500l3-10h1l3 10M17.500 21.500h5M26.500 14.500v10" />
  </svg>
);

const MediaLibrary = () => (
  <Panel>
    <LibraryTabs>
      {tabs.map(([key, label]) => (
        <LibraryTab key={key} $active={key === "title"}>
          <Svg viewBox="0 0 36 36" $size={36} $weight={2.6} aria-hidden="true">{tabGlyphs[key]}</Svg>
          {label}
        </LibraryTab>
      ))}
    </LibraryTabs>
    <LibraryBody>
      <Sidebar>
        <Folder><Triangle $dir="right" />我的</Folder>
        <Folder><Triangle $dir="right" />AI字幕</Folder>
        <Folder $open><Triangle $dir="down" />標題</Folder>
        {subFolders.map((name, i) => <SubFolder key={name} $active={i === 0}>{name}</SubFolder>)}
        <Folder $last><Blank />音訊驅動文字</Folder>
        <Thumb $top={6} $height={92} />
      </Sidebar>
      <Library>
        <SearchRow>
          <StoreButton aria-label="store"><Icon name="store" size={24} weight={2} /></StoreButton>
          <SearchBox>
            <Icon name="search" />
            <input type="text" placeholder="搜尋所有標題" />
          </SearchBox>
          <SelectBox $w={90} $bg="#373c42">
            <select aria-label="filter"><option>全部</option></select>
            <Icon name="chevron" size={22} weight={2} />
          </SelectBox>
          <IconButton aria-label="more" $w={60}><Icon name="dots" size={24} /></IconButton>
        </SearchRow>
        <SectionTitle>熱門推薦</SectionTitle>
        <TitleGrid>
          {cards.map((c) => (
            <Card key={c.label}>
              <Preview $kind={c.kind}>
                {c.kind === "art" ? (
                  <svg width="180" height="70" viewBox="0 0 180 70">
                    <ArtText x="88" y="56" $stroke={9}>{c.text}</ArtText>
                  </svg>
                ) : c.text}
                {c.icon && (
                  <CornerButton aria-label={c.icon}>
                    <Icon name={c.icon} size={c.icon === "plus" ? 28 : 24} weight={c.icon === "plus" ? 3 : 1.8} />
                  </CornerButton>
                )}
              </Preview>
              <figcaption>{c.label}</figcaption>
            </Card>
          ))}
        </TitleGrid>
        <Similar>
          <SimilarHead><span>相似的推薦</span><button>更多 &gt;</button></SimilarHead>
          <SimilarRow><SimilarItem /><SimilarItem $dark /><SimilarItem /></SimilarRow>
        </Similar>
        <Thumb $top={104} $height={34} />
      </Library>
    </LibraryBody>
  </Panel>
);

const Player = () => (
  <Panel>
    <PlayerHead>
      播放器
      <SelectBox $w={180} $bg="#21262b">
        <select aria-label="quality"><option>最高品質</option></select>
        <Icon name="chevron" size={22} weight={2} />
      </SelectBox>
      <Spacer />
      <IconButton aria-label="compare" $w={42} $dim><Icon name="compare" size={30} weight={1.6} /></IconButton>
      <IconButton aria-label="scope" $w={28}><Icon name="wave" size={26} weight={1.8} /></IconButton>
    </PlayerHead>
    <Screen>
      <svg width="320" height="100" viewBox="0 0 320 100">
        <VideoText x="160" y="73" $stroke={12}>文字動畫</VideoText>
      </svg>
    </Screen>
    <SeekRow>
      <Range type="range" aria-label="seek" min={0} max={100} defaultValue={0} $fill={0} />
      <TimeInput aria-label="current time" defaultValue="00:00:00:00" />
      <Slash>/</Slash>
      <span>00:00:05:00</span>
    </SeekRow>
    <Transport>
      <Group>
        <IconButton aria-label="previous frame" $dim><Icon name="prev" /></IconButton>
        <IconButton aria-label="next frame" $w={52}><Icon name="next" weight={1.8} /></IconButton>
        <IconButton aria-label="play" $w={46}><Icon name="play" weight={1.8} /></IconButton>
        <IconButton aria-label="stop"><Icon name="stop" weight={1.8} /></IconButton>
      </Group>
      <Group>
        <IconButton aria-label="mark in" $w={40}><Icon name="braceL" weight={1.8} /></IconButton>
        <IconButton aria-label="mark out" $w={60}><Icon name="braceR" weight={1.8} /></IconButton>
        <IconButton aria-label="insert" $w={36} $dim><Icon name="insert" size={26} /></IconButton>
        <IconButton aria-label="insert options" $w={36} $dim><Icon name="chevron" size={24} /></IconButton>
        <IconButton aria-label="display" $w={56}><Icon name="monitor" size={26} weight={1.8} /></IconButton>
        <IconButton aria-label="snapshot"><Icon name="camera" size={26} weight={1.8} /></IconButton>
        <IconButton aria-label="volume"><Icon name="speaker" size={26} weight={1.8} /></IconButton>
        <IconButton aria-label="full screen"><Icon name="expand" size={26} weight={2} /></IconButton>
      </Group>
    </Transport>
  </Panel>
);

const KeyframeButton = () => <KeyButton aria-label="keyframe"><Icon name="diamond" /></KeyButton>;

const toggles = [
  { id: "bg", label: "背景" },
  { id: "shape", label: "形狀" },
  { id: "bezier", label: "貝茲路徑", isNew: true },
];

const PropsPanel = styled(Panel)`
  grid-column: 3;
  grid-row: 1 / 3;
  border-radius: 14px 14px 0 0;
`;

const Properties = () => (
  <PropsPanel>
    <PropTabs>
      <PropTab $w={90} $active>字幕</PropTab>
      <PropTab $w={126}>影片</PropTab>
      <PropTab $w={114}>文字轉語音</PropTab>
    </PropTabs>
    <SubTabs>
      <Pill $active>基礎</Pill>
      <Pill>動畫</Pill>
      <Spacer />
      <IconButton aria-label="save preset" $w={36}><Icon name="preset" /></IconButton>
    </SubTabs>
    <LayerRow>層級 01<AiPen /></LayerRow>
    <PropScroll>
      <ChipStrip><Chip /><Chip /><Chip /></ChipStrip>
      <PropRow><Fold>更多文字選項<Triangle $dir="up" /></Fold></PropRow>
      <PropRow><Fold>形變<Triangle $dir="down" /></Fold><Spacer /><KeyframeButton /></PropRow>
      <TransformCard>
        <Field>
          <FieldHead>旋轉<Spacer /><KeyframeButton /></FieldHead>
          <FieldBody $gap={24}>
            <Dial aria-label="rotation dial" />
            <NumberBox><input aria-label="rotation" defaultValue="0.00°" /></NumberBox>
          </FieldBody>
        </Field>
        <Field>
          <FieldHead>縮放<Spacer /><KeyButton aria-label="reset scale"><Icon name="reset" size={26} weight={2} /></KeyButton><KeyframeButton /></FieldHead>
          <FieldBody $gap={27}>
            <Range type="range" aria-label="scale" min={0} max={100} defaultValue={11} $fill={11} />
            <NumberBox $w={106}><input aria-label="scale value" defaultValue="44.40" /></NumberBox>
          </FieldBody>
        </Field>
        <Field>
          <FieldHead>位置<Spacer /><KeyframeButton /></FieldHead>
          <FieldBody $gap={24}>
            <Pair><AxisLabel htmlFor="posX">X</AxisLabel><NumberBox><input id="posX" defaultValue="0.00" />px</NumberBox></Pair>
            <Pair><AxisLabel htmlFor="posY">Y</AxisLabel><NumberBox><input id="posY" defaultValue="0.00" />px</NumberBox></Pair>
          </FieldBody>
        </Field>
      </TransformCard>
      <PropRow><Fold>影像合成<Triangle $dir="up" /></Fold><Spacer /><KeyframeButton /></PropRow>
      {toggles.map((t) => (
        <PropRow key={t.id}>
          <Toggle type="checkbox" id={t.id} />
          <ToggleLabel htmlFor={t.id}>{t.label}</ToggleLabel>
          {t.isNew && <NewBadge>NEW</NewBadge>}
          <Triangle $dir="up" />
        </PropRow>
      ))}
      <PropRow>
        <Toggle type="checkbox" id="outline" defaultChecked />
        <ToggleLabel htmlFor="outline">輪廓</ToggleLabel>
        <Triangle $dir="up" />
        <OutlineTools>
          <ColorBox>
            <input type="color" aria-label="outline colour" defaultValue="#00ff00" />
            <IconButton aria-label="colour options" $w={26} $color="#eef1f4"><Icon name="chevron" size={26} weight={2.2} /></IconButton>
          </ColorBox>
          <IconButton aria-label="pick colour" $w={36}><Icon name="dropper" size={24} /></IconButton>
          <IconButton aria-label="add outline" $w={36}><Icon name="zoomIn" weight={1.4} /></IconButton>
        </OutlineTools>
      </PropRow>
      <Thumb $top={305} $height={493} $width={6} />
    </PropScroll>
    <Foot>
      <FootButton>重設</FootButton>
      <FootButton $primary>高級編輯</FootButton>
    </Foot>
    <KeyframeMark />
  </PropsPanel>
);

const Timeline = () => (
  <TimelinePanel>
    <Tools>
      <IconButton aria-label="apps"><Icon name="apps" weight={1.9} /></IconButton>
      <IconButton aria-label="select"><Icon name="cursor" weight={1.8} /></IconButton>
      <Divider />
      <IconButton aria-label="undo" $w={60}><Icon name="undo" weight={1.9} /></IconButton>
      <IconButton aria-label="redo" $w={60} $dim><Icon name="redo" weight={1.9} /></IconButton>
      <IconButton aria-label="delete" $w={60}><Icon name="trash" weight={1.9} /></IconButton>
      <IconButton aria-label="cut" $w={60} $dim><Icon name="cut" weight={1.9} /></IconButton>
      <IconButton aria-label="text" $w={60}><Icon name="text" weight={1.9} /></IconButton>
      <MoreAnchor>
        <MoreButton aria-label="more tools"><Icon name="more" size={26} weight={2} /></MoreButton>
        <Dropdown>
          {dropItems.map((d) => (
            <DropItem key={d.text} $dim={d.dim} $marked={d.marked}>
              <Icon name={d.icon} size={20} weight={1.8} />
              {d.text}
              {d.arrow && <><Spacer /><Triangle $dir="right" /></>}
            </DropItem>
          ))}
        </Dropdown>
      </MoreAnchor>
      <IconButton aria-label="assistant" $w={60}><Robot /></IconButton>
      <IconButton aria-label="auto cut" $w={60} $color={MINT}><Icon name="autocut" weight={1.8} /></IconButton>
      <IconButton aria-label="smart clip" $w={60} $dim><Icon name="film" weight={1.8} /></IconButton>
      <IconButton aria-label="record" $w={60}><Icon name="record" weight={1.8} /></IconButton>
      <IconButton aria-label="marker" $w={60}><Icon name="marker" weight={1.8} /></IconButton>
      <IconButton aria-label="voice" $w={60}><Icon name="mic" size={26} weight={1.9} /></IconButton>
      <IconButton aria-label="audio mixer" $w={60}><Icon name="music" size={26} weight={1.9} /></IconButton>
      <IconButton aria-label="preview" $w={60}><Icon name="preview" size={28} weight={1.8} /></IconButton>
      <IconButton aria-label="fit" $w={60}><Icon name="fit" size={28} weight={1.8} /></IconButton>
      <ZoomGroup>
        <IconButton aria-label="zoom out" $w={30} $color="#e3e7eb"><Icon name="zoomOut" weight={1.8} /></IconButton>
        <Range type="range" aria-label="timeline zoom" min={0} max={100} defaultValue={68} $fill={67} $bar={4} />
        <IconButton aria-label="zoom in" $w={30} $color="#e3e7eb"><Icon name="zoomIn" weight={1.8} /></IconButton>
      </ZoomGroup>
      <Meter>{Array.from({ length: 10 }, (_, i) => <span key={i} />)}</Meter>
      <Triangle $dir="down" />
    </Tools>
    <Board>
      <TrackTools>
        <IconButton aria-label="unlink"><Icon name="unlink" weight={1.9} /></IconButton>
        <IconButton aria-label="link"><Icon name="chain" weight={1.9} /></IconButton>
        <IconButton aria-label="magnet" $dim><Icon name="magnet" weight={1.9} /></IconButton>
      </TrackTools>
      <Ruler>
        {rulerLabels.map((t, i) => (
          <RulerCell key={t}>
            {t}
            <Ticks>
              <Tick $major={i > 0} /><Tick /><Tick /><Tick /><Tick />
            </Ticks>
          </RulerCell>
        ))}
      </Ruler>
      <TrackHead /><Lane />
      <VScroll><Thumb $top={0} $height={265} $width={18} /></VScroll>
      <TrackHead $alt $top={27}>
        <p>影片 1</p>
        <Group>
          <IconButton aria-label="lock video" $w={36}><Icon name="lock" size={20} weight={2} /></IconButton>
          <IconButton aria-label="mute video" $w={36}><Icon name="speaker" size={20} weight={2.2} /></IconButton>
          <IconButton aria-label="show video" $w={36} $color="#f2f4f6"><Icon name="eye" size={20} weight={2} /></IconButton>
          <IconButton aria-label="video effects" $w={36}><Icon name="wand" size={20} weight={2} /></IconButton>
        </Group>
      </TrackHead>
      <Lane $alt>
        <Clip>
          <ClipBadge><Icon name="serifT" size={16} weight={4} /></ClipBadge>
          文字動畫
        </Clip>
      </Lane>
      <TrackHead $top={7}>
        <p>音訊 1</p>
        <Group>
          <IconButton aria-label="lock audio" $w={36}><Icon name="lock" size={20} weight={2} /></IconButton>
          <IconButton aria-label="mute audio" $w={36}><Icon name="speaker" size={20} weight={2.2} /></IconButton>
          <IconButton aria-label="audio effects" $w={36}><Icon name="wand" size={20} weight={2} /></IconButton>
        </Group>
      </TrackHead>
      <Lane />
      <TrackHead $alt /><Lane $alt />
      <AddTrack aria-label="add track"><Icon name="plus" size={18} weight={3} /></AddTrack>
      <HScroll><HBar><span /><span /></HBar></HScroll>
      <RenderBar />
      <Playhead>
        <PlayheadCap />
        <SplitHandle aria-label="split">
          <svg width="16" height="53" viewBox="0 0 16 53" fill="none" stroke="currentColor" strokeWidth="1.800" aria-hidden="true">
            <path d="M6 15L1 27l4 8" /><path d="M4.500 35c-3-4 1-8 4-7s3 7 0 8.500c-2 1-3.500 0-4-1.500z" />
          </svg>
        </SplitHandle>
      </Playhead>
    </Board>
  </TimelinePanel>
);

export default function App() {
  return (
    <>
      <GlobalStyle />
      <Window>
        <TitleBar>
          <BarSide>
            <Logo />
            <AppName>Wondershare Filmora</AppName>
            <Menus>{menus.map((m) => <MenuButton key={m}>{m}</MenuButton>)}</Menus>
          </BarSide>
          <ProjectName>未命名專案</ProjectName>
          <BarSide $end>
            {barIcons.map((n) => <IconButton key={n} aria-label={n}><Icon name={n} weight={1.7} /></IconButton>)}
            <Avatar aria-label="account"><AvatarArt /></Avatar>
            <ExportButton>匯出<Icon name="chevron" size={26} weight={2} /></ExportButton>
            <IconButton aria-label="minimize" $w={60} $color="#eceff2"><Icon name="minimize" weight={1.8} /></IconButton>
            <IconButton aria-label="maximize" $w={60} $color="#eceff2"><Icon name="maximize" weight={1.8} /></IconButton>
            <IconButton aria-label="close" $w={60} $color="#eceff2"><Icon name="close" weight={1.8} /></IconButton>
          </BarSide>
        </TitleBar>
        <Workspace>
          <MediaLibrary />
          <Player />
          <Properties />
          <Timeline />
        </Workspace>
      </Window>
    </>
  );
}
